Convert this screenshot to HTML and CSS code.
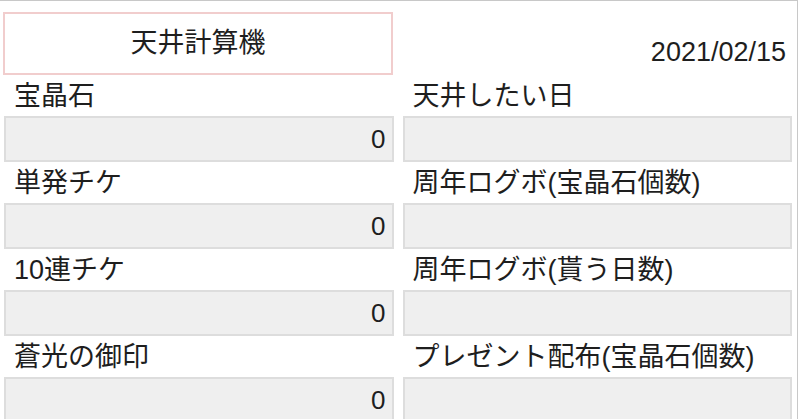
FILE: index.html
```html
<!DOCTYPE html>
<html lang="ja">
<head>
    <meta charset="UTF-8">
    <meta name="viewport" content="width=device-width, initial-scale=1.0">
    <title>天井計算機</title>
    <link rel="stylesheet" href="styles.css">
</head>
<body>
    <div class="page">
        <div class="header">
            <div class="title">天井計算機</div>
            <div class="date">2021/02/15</div>
        </div>

        <div class="fields">
            <div class="field">
                <label class="label">宝晶石</label>
                <input class="input" type="text" value="0">
            </div>
            <div class="field">
                <label class="label">天井したい日</label>
                <input class="input" type="text" value="">
            </div>

            <div class="field">
                <label class="label">単発チケ</label>
                <input class="input" type="text" value="0">
            </div>
            <div class="field">
                <label class="label">周年ログボ(宝晶石個数)</label>
                <input class="input" type="text" value="">
            </div>

            <div class="field">
                <label class="label">10連チケ</label>
                <input class="input" type="text" value="0">
            </div>
            <div class="field">
                <label class="label">周年ログボ(貰う日数)</label>
                <input class="input" type="text" value="">
            </div>

            <div class="field">
                <label class="label">蒼光の御印</label>
                <input class="input" type="text" value="0">
            </div>
            <div class="field">
                <label class="label">プレゼント配布(宝晶石個数)</label>
                <input class="input" type="text" value="">
            </div>
        </div>
    </div>
</body>
</html>
```

FILE: styles.css
```css
body {
    margin: 0;
    background-color: #fff;
    font-family: "Liberation Sans", "Noto Sans CJK JP", sans-serif;
    color: #1e1e1e;
    overflow: hidden;
}
.page {
    width: 789px;
    height: 407px;
    overflow: hidden;
    padding: 11px 5px 0 3px;
    border-top: 1px solid #c8c8c8;
    border-right: 1px solid #c8c8c8;
}
.header {
    display: grid;
    grid-template-columns: 1fr 1fr;
    column-gap: 9px;
}
.title {
    height: 59px;
    line-height: 59px;
    border: 2px solid #f1cdcd;
    text-align: center;
    font-size: 27px;
}
.date {
    align-self: end;
    text-align: right;
    font-size: 27px;
    line-height: 30px;
    padding: 0 6px 8px 0;
}
.fields {
    display: grid;
    grid-template-columns: 1fr 1fr;
    column-gap: 9px;
    padding-left: 1px;
}
.field {
    display: flex;
    flex-direction: column;
}
.label {
    height: 41px;
    line-height: 42px;
    padding-left: 10px;
    font-size: 27px;
    white-space: nowrap;
}
.input {
    box-sizing: border-box;
    width: 100%;
    height: 46px;
    margin: 0;
    padding: 0 6px;
    border: 2px solid #dddddd;
    background-color: #efefef;
    font-family: inherit;
    font-size: 26px;
    color: #1e1e1e;
    text-align: right;
    outline: none;
}
```
